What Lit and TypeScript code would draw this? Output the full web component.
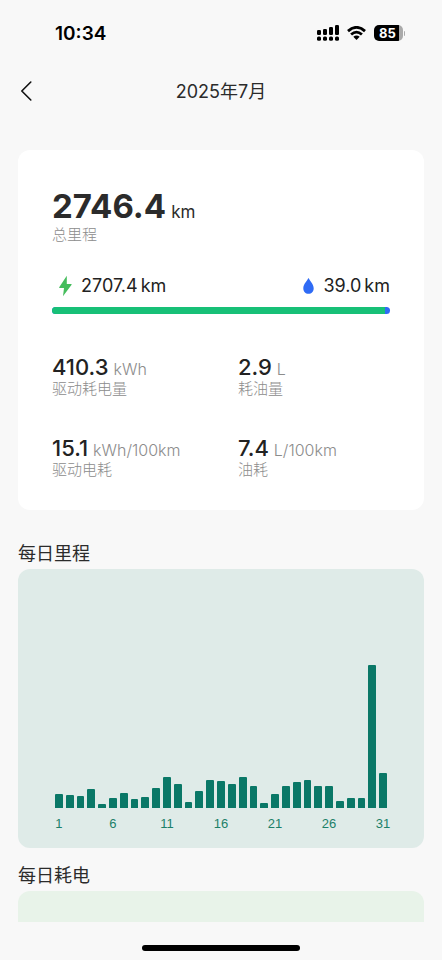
import { LitElement, html, css, svg } from "lit";
import { customElement, property } from "lit/decorators.js";

const dailyMileage = [
  14, 13, 12, 19, 4, 10, 15, 9, 11, 20, 31, 24, 6, 17, 28, 27, 24, 31, 22, 5, 14,
  22, 26, 28, 22, 22, 7, 10, 10, 143, 35,
];

const stats = [
  { value: "410.3", unit: "kWh", label: "驱动耗电量" },
  { value: "2.9", unit: "L", label: "耗油量" },
  { value: "15.1", unit: "kWh/100km", label: "驱动电耗" },
  { value: "7.4", unit: "L/100km", label: "油耗" },
];

@customElement("status-bar")
class StatusBar extends LitElement {
  static styles = css`
    :host {
      display: flex;
      align-items: center;
      justify-content: space-between;
      height: 66px;
      padding: 0 37px 0 55px;
      color: #000;
      flex: none;
    }
    .time {
      padding-top: 2px;
      font-size: 19px;
      font-weight: 600;
      line-height: 24px;
    }
    .icons {
      display: flex;
      align-items: center;
      gap: 8px;
    }
    .icons svg {
      display: block;
    }
    .battery {
      display: flex;
      align-items: center;
      gap: 1px;
    }
    .level {
      box-sizing: border-box;
      width: 29px;
      height: 16px;
      padding-left: 5px;
      border-radius: 5px;
      background: linear-gradient(to right, #000 85%, #aaa 85%);
      color: #fff;
      font-size: 13px;
      font-weight: 700;
      line-height: 16px;
    }
    .tip {
      width: 1px;
      height: 5px;
      border-radius: 0 1px 1px 0;
      background: #aaa;
    }
  `;

  render() {
    return html`
      <span class="time">10:34</span>
      <div class="icons">
        <svg width="22" height="16" viewBox="0 0 22 16" aria-label="信号">
          ${[0, 1, 2, 3].map(
            (i) => svg`
              <rect x=${i * 6} y=${[5, 4, 2, 0][i]} width="4" height=${[5, 6, 8, 10][i]} rx="1.3"/>
              <rect x=${i * 6} y="11.600" width="4" height="4.200" rx="1.5"/>`
          )}
        </svg>
        <svg width="19" height="14" viewBox="0 0 19 14" aria-label="无线网络">
          <g fill="none" stroke="#000" stroke-width="2.800">
            <path d="M1 5.1Q9.500-2.400 18 5.100"/>
            <path d="M4.100 8.500Q9.500 3.700 14.900 8.500"/>
          </g>
          <path d="M6.300 10.800Q9.500 8.200 12.700 10.800L9.500 14Z"/>
        </svg>
        <div class="battery">
          <div class="level">85</div>
          <div class="tip"></div>
        </div>
      </div>
    `;
  }
}

@customElement("day-chart")
class DayChart extends LitElement {
  @property({ attribute: false }) values: number[] = [];

  static styles = css`
    :host {
      display: block;
      border-radius: 12px;
      background: #dfebe8;
      padding: 96px 37px 14px;
    }
    .bars,
    .axis {
      display: grid;
      grid-template-columns: repeat(31, 1fr);
      column-gap: 3px;
    }
    .bars {
      height: 143px;
      align-items: end;
    }
    .bar {
      border-radius: 1px 1px 0 0;
      background: #0a7867;
    }
    .axis {
      margin-top: 6px;
      color: #1c8069;
      font-family: "Liberation Sans", Arial, sans-serif;
      font-size: 13px;
      line-height: 20px;
    }
    .tick {
      display: flex;
      justify-content: center;
      width: 0;
      min-width: 100%;
    }
  `;

  render() {
    return html`
      <div class="bars">
        ${this.values.map(
          (v) => html`<div class="bar" style="height:${v}px"></div>`
        )}
      </div>
      <div class="axis">
        ${this.values.map(
          (_, i) => html`<span class="tick">${i % 5 === 0 ? i + 1 : ""}</span>`
        )}
      </div>
    `;
  }
}

@customElement("app-root")
class AppRoot extends LitElement {
  static styles = css`
    :host {
      display: flex;
      flex-direction: column;
      height: 100vh;
      background: #f8f8f8;
      color: #2b2b2b;
      font-family: Inter, "Noto Sans CJK SC", sans-serif;
    }
    .nav {
      display: grid;
      grid-template-columns: 40px 1fr 40px;
      align-items: center;
      flex: none;
      height: 50px;
      padding: 0 10px;
    }
    .back {
      display: flex;
      padding: 8px;
      border: 0;
      background: none;
    }
    .title {
      margin: 0;
      padding-top: 2px;
      font-size: 18px;
      font-weight: 400;
      line-height: 26px;
      text-align: center;
    }
    .content {
      flex: 1;
      min-height: 0;
      overflow: auto;
      scrollbar-width: none;
      padding: 34px 18px 0;
    }
    .card {
      padding: 36px 34px 31px;
      border-radius: 12px;
      background: #fff;
    }
    .total {
      display: flex;
      align-items: baseline;
      gap: 5px;
      line-height: 40px;
    }
    .total-value {
      font-size: 33px;
      font-weight: 700;
    }
    .total-unit {
      font-size: 17px;
      line-height: 20px;
    }
    .label {
      color: #8c8c8c;
      font-size: 15px;
      font-weight: 300;
      line-height: 18px;
    }
    .split {
      display: flex;
      justify-content: space-between;
      margin-top: 31px;
      padding-left: 6px;
    }
    .part {
      display: flex;
      align-items: center;
      gap: 8px;
      color: #222;
      font-size: 18px;
      line-height: 22px;
    }
    .amount {
      display: flex;
      gap: 3px;
    }
    .ratio {
      height: 7px;
      margin-top: 10px;
      border-radius: 4px;
      background: #2f6bf5;
      overflow: hidden;
    }
    .electric {
      height: 100%;
      background: #17c077;
    }
    .stats {
      display: grid;
      grid-template-columns: 55% 45%;
      row-gap: 37px;
      margin-top: 40px;
    }
    .stat {
      display: flex;
      align-items: baseline;
      gap: 5px;
      line-height: 26px;
    }
    .stat-value {
      color: #222;
      font-size: 22px;
      font-weight: 500;
    }
    .stat-unit {
      color: #8c8c8c;
      font-size: 16px;
      font-weight: 300;
      line-height: 18px;
    }
    .section {
      margin: 30px 0 2px;
      font-size: 18px;
      font-weight: 400;
      line-height: 27px;
    }
    .section.next {
      margin-top: 14px;
    }
    .energy {
      height: 280px;
      border-radius: 12px;
      background: #e8f3e9;
    }
    .home {
      display: flex;
      justify-content: center;
      flex: none;
      height: 15px;
      padding-top: 23px;
    }
    .home-bar {
      width: 158px;
      height: 6px;
      border-radius: 3px;
      background: #000;
    }
  `;

  render() {
    return html`
      <status-bar></status-bar>
      <header class="nav">
        <button class="back" aria-label="返回">
          <svg width="16" height="22" viewBox="0 0 16 22" fill="none" stroke="#111" stroke-width="1.6" stroke-linecap="round" stroke-linejoin="round">
            <path d="M12.800 2L3.800 11L12.800 20"/>
          </svg>
        </button>
        <h1 class="title">2025年7月</h1>
      </header>
      <main class="content">
        <section class="card">
          <div class="total">
            <span class="total-value">2746.4</span>
            <span class="total-unit">km</span>
          </div>
          <div class="label">总里程</div>
          <div class="split">
            <div class="part">
              <svg width="15" height="22" viewBox="0 0 15 22" fill="#45bd5c" aria-label="电">
                <path d="M8.800 .8 1.200 12.200Q.900 12.900 1.600 12.900H6L5 21.200 13.600 9.700Q13.900 9 13.200 9H8.800Z"/>
              </svg>
              <span class="amount"><span>2707.4</span><span>km</span></span>
            </div>
            <div class="part">
              <svg width="15" height="22" viewBox="0 0 15 22" fill="#2f6bf5" aria-label="油">
                <path d="M8.500 3C7.500 5 3.300 9.500 3.300 13.200C3.300 16.400 5.500 18.800 8.500 18.800S13.700 16.400 13.700 13.200C13.700 9.500 9.500 5 8.500 3Z"/>
              </svg>
              <span class="amount"><span>39.0</span><span>km</span></span>
            </div>
          </div>
          <div class="ratio"><div class="electric" style="width:98.6%"></div></div>
          <div class="stats">
            ${stats.map(
              (s) => html`
                <div>
                  <div class="stat">
                    <span class="stat-value">${s.value}</span>
                    <span class="stat-unit">${s.unit}</span>
                  </div>
                  <div class="label">${s.label}</div>
                </div>
              `
            )}
          </div>
        </section>
        <h2 class="section">每日里程</h2>
        <day-chart .values=${dailyMileage}></day-chart>
        <h2 class="section next">每日耗电</h2>
        <div class="energy"></div>
      </main>
      <footer class="home"><div class="home-bar"></div></footer>
    `;
  }
}
